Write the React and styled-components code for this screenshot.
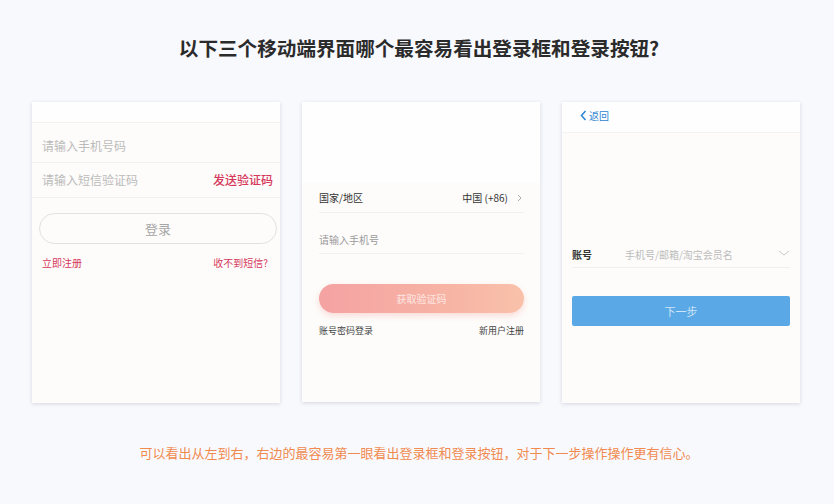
import React from 'react';
import styled, { createGlobalStyle } from 'styled-components';

const GlobalStyle = createGlobalStyle`
  html, body {
    margin: 0;
    padding: 0;
    background: #f8f9fd;
  }
  body {
    font-family: "Noto Sans CJK SC", "Noto Sans", sans-serif;
  }
`;

const StyledPage = styled.div`
  width: 834px;
  height: 504px;
  overflow: hidden;
  background: #f8f9fd;
  display: flex;
  flex-direction: column;
  align-items: center;
`;

const StyledTitle = styled.h1`
  margin: 34px 0 0 4px;
  font-size: 19.6px;
  line-height: 28px;
  font-weight: 700;
  color: #2b2b2b;
`;

const StyledCards = styled.div`
  display: flex;
  gap: 22px;
  align-self: stretch;
  padding: 0 34px 0 32px;
  margin-top: 40px;
  align-items: flex-start;
`;

const StyledCard = styled.div`
  width: ${props => props.$w}px;
  height: ${props => props.$h}px;
  background: #fdfcfa;
  box-shadow: 0 1px 4px rgba(40, 40, 60, 0.16);
  display: flex;
  flex-direction: column;
  padding: 0 ${props => props.$pr || 0}px 0 ${props => props.$pl || 0}px;
  box-sizing: border-box;
`;

const StyledBand = styled.div`
  height: ${props => props.$h}px;
  flex-shrink: 0;
  background: #fefefe;
  border-bottom: 1px solid ${props => props.$line || '#f4f3f1'};
  margin: 0 -${props => props.$br || 0}px 0 -${props => props.$bl || 0}px;
  padding: ${props => props.$pt || 0}px ${props => props.$br || 0}px 0 ${props => props.$bl || 0}px;
  box-sizing: border-box;
  display: flex;
  align-items: flex-start;
`;

const StyledField = styled.div`
  height: ${props => props.$h}px;
  flex-shrink: 0;
  display: flex;
  align-items: ${props => (props.$bottom ? 'flex-end' : 'center')};
  padding-bottom: ${props => props.$pb || 0}px;
  justify-content: space-between;
  border-bottom: 1px solid ${props => props.$line || '#f2f1ee'};
  box-sizing: border-box;
  font-size: ${props => props.$fs}px;
  line-height: 1.3;
  padding-left: ${props => props.$pl || 0}px;
  padding-right: ${props => props.$pr || 0}px;
`;

const StyledHint = styled.span`
  color: ${props => props.$c || '#bbbbbb'};
  flex: ${props => (props.$grow ? 1 : 'none')};
`;

const StyledStrong = styled.span`
  color: ${props => props.$c || '#333'};
  font-weight: ${props => props.$fw || 400};
  width: ${props => (props.$w ? `${props.$w}px` : 'auto')};
  display: inline-flex;
  align-items: center;
`;

const StyledGhostButton = styled.div`
  margin: 15px 3px 0 7px;
  height: 31px;
  border: 1px solid #e2e1de;
  border-radius: 16px;
  box-sizing: border-box;
  display: flex;
  align-items: center;
  justify-content: center;
  font-size: 13px;
  color: #a5a5a5;
`;

const StyledGradientButton = styled.div`
  margin-top: 30px;
  height: 29px;
  border-radius: 15px;
  background: linear-gradient(90deg, #f4a2a2 0%, #f7b3a4 60%, #f9c1aa 100%);
  box-shadow: 0 3px 6px rgba(242, 150, 140, 0.3);
  display: flex;
  align-items: center;
  justify-content: center;
  font-size: 10px;
  color: #fde6e2;
`;

const StyledFlatButton = styled.div`
  margin-top: 28px;
  height: 30px;
  border-radius: 2px;
  background: #5aa9e6;
  display: flex;
  align-items: center;
  justify-content: center;
  font-size: 11px;
  color: #cfe4f6;
`;

const StyledLinks = styled.div`
  display: flex;
  justify-content: space-between;
  margin-top: ${props => props.$mt}px;
  padding: 0 ${props => props.$pr || 0}px 0 ${props => props.$pl || 0}px;
  font-size: ${props => props.$fs}px;
  line-height: 13px;
  color: ${props => props.$c};
`;

const StyledBack = styled.div`
  display: flex;
  align-items: center;
  gap: 2px;
  color: #2f86d4;
  font-size: 10px;
  line-height: 13px;
  padding-left: 8px;
`;

const StyledNote = styled.p`
  margin: 42px 0 0 4px;
  font-size: 13px;
  line-height: 16px;
  color: #f08a4f;
`;

const App = () => {
  return (
    <StyledPage>
      <GlobalStyle />
      <StyledTitle>以下三个移动端界面哪个最容易看出登录框和登录按钮?</StyledTitle>
      <StyledCards>
        <StyledCard $w={248} $h={301}>
          <StyledBand $h={21} />
          <StyledField $h={40} $fs={12} $pl={10} $bottom $pb={8}>
            <StyledHint>请输入手机号码</StyledHint>
          </StyledField>
          <StyledField $h={35} $fs={12} $pl={10} $pr={7}>
            <StyledHint>请输入短信验证码</StyledHint>
            <StyledStrong $c="#d6385c" $fw={500}>发送验证码</StyledStrong>
          </StyledField>
          <StyledGhostButton>登录</StyledGhostButton>
          <StyledLinks $mt={12} $fs={10} $c="#d6385c" $pl={10} $pr={12}>
            <span>立即注册</span>
            <span>收不到短信?</span>
          </StyledLinks>
        </StyledCard>

        <StyledCard $w={238} $h={300} $pl={17} $pr={16}>
          <StyledBand $h={81} $bl={17} $br={16} $line="transparent" />
          <StyledField $h={30} $fs={10}>
            <StyledStrong>国家/地区</StyledStrong>
            <StyledStrong>
              中国 (+86)
              <svg width="12" height="10" viewBox="0 0 12 10" style={{ marginLeft: 4 }}>
                <path d="M6 2 L9 5 L6 8" fill="none" stroke="#aaa" strokeWidth="1" />
              </svg>
            </StyledStrong>
          </StyledField>
          <StyledField $h={41} $fs={10} $bottom $pb={7}>
            <StyledHint $c="#9a9a9a">请输入手机号</StyledHint>
          </StyledField>
          <StyledGradientButton>获取验证码</StyledGradientButton>
          <StyledLinks $mt={11} $fs={9} $c="#444">
            <span>账号密码登录</span>
            <span>新用户注册</span>
          </StyledLinks>
        </StyledCard>

        <StyledCard $w={238} $h={301} $pl={10} $pr={10}>
          <StyledBand $h={31} $bl={10} $br={10} $pt={7}>
            <StyledBack>
              <svg width="7" height="11" viewBox="0 0 7 11">
                <path d="M5.5 1 L1.5 5.5 L5.5 10" fill="none" stroke="#2f86d4" strokeWidth="1.6" />
              </svg>
              返回
            </StyledBack>
          </StyledBand>
          <StyledField $h={135} $fs={10} $bottom $pb={6} $line="#f0efec">
            <StyledStrong $fw={700} $w={53}>账号</StyledStrong>
            <StyledHint $grow>手机号/邮箱/淘宝会员名</StyledHint>
            <svg width="12" height="8" viewBox="0 0 12 8" style={{ marginBottom: 4 }}>
              <path d="M1 2 L6 6 L11 2" fill="none" stroke="#c8c8c8" strokeWidth="1" />
            </svg>
          </StyledField>
          <StyledFlatButton>下一步</StyledFlatButton>
        </StyledCard>
      </StyledCards>
      <StyledNote>可以看出从左到右，右边的最容易第一眼看出登录框和登录按钮，对于下一步操作操作更有信心。</StyledNote>
    </StyledPage>
  );
};

export default App;
